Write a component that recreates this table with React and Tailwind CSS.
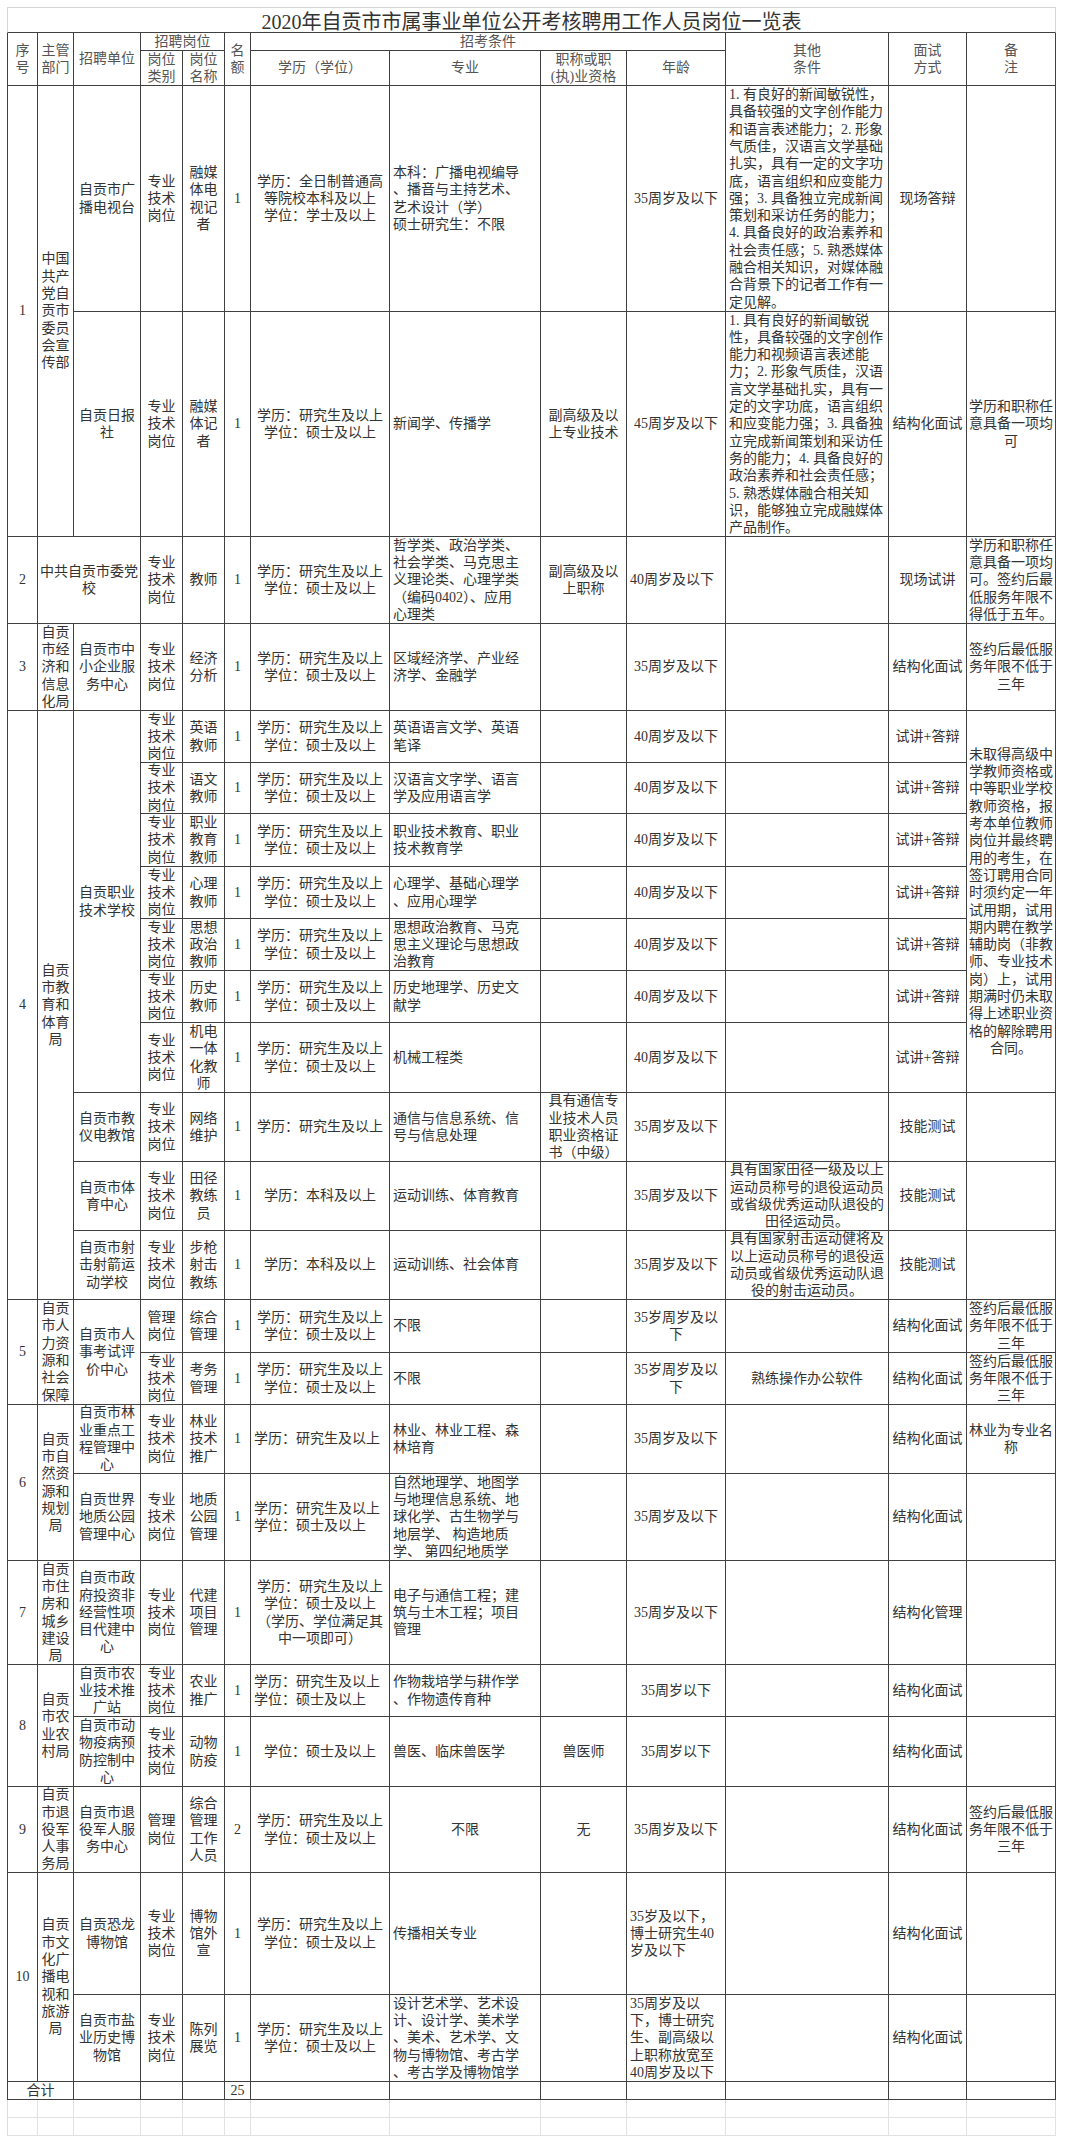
import clsx from "clsx";

// 2020年自贡市市属事业单位公开考核聘用工作人员岗位一览表 — spreadsheet style table

const EDU = "学历：研究生及以上\n学位：硕士及以上";
const ZY = "专业\n技术\n岗位";
const A40 = "40周岁及以下";
const A35 = "35周岁及以下";
const SJ = "试讲+答辩";
const JG = "结构化面试";
const QY = "签约后最低服\n务年限不低于\n三年";

const OTHER1 =
  "1. 有良好的新闻敏锐性，\n具备较强的文字创作能力\n和语言表述能力；2. 形象\n气质佳，汉语言文学基础\n扎实，具有一定的文字功\n底，语言组织和应变能力\n强；3. 具备独立完成新闻\n策划和采访任务的能力；\n4. 具备良好的政治素养和\n社会责任感；5. 熟悉媒体\n融合相关知识，对媒体融\n合背景下的记者工作有一\n定见解。";
const OTHER2 =
  "1. 具有良好的新闻敏锐\n性，具备较强的文字创作\n能力和视频语言表述能\n力；2. 形象气质佳，汉语\n言文学基础扎实，具有一\n定的文字功底，语言组织\n和应变能力强；3. 具备独\n立完成新闻策划和采访任\n务的能力；4. 具备良好的\n政治素养和社会责任感；\n5. 熟悉媒体融合相关知\n识，能够独立完成融媒体\n产品制作。";
const NOTE4 =
  "未取得高级中\n学教师资格或\n中等职业学校\n教师资格，报\n考本单位教师\n岗位并最终聘\n用的考生，在\n签订聘用合同\n时须约定一年\n试用期，试用\n期内聘在教学\n辅助岗（非教\n师、专业技术\n岗）上，试用\n期满时仍未取\n得上述职业资\n格的解除聘用\n合同。";

const L = (t, s = "") => ({ t, a: "l", s });
const S = (t, s) => ({ t, s });

const header = [
  S("序\n号", "row-span-2"),
  S("主管\n部门", "row-span-2"),
  S("招聘单位", "row-span-2"),
  S("招聘岗位", "col-span-2"),
  S("名\n额", "row-span-2"),
  S("招考条件", "col-span-4"),
  S("其他\n条件", "row-span-2"),
  S("面试\n方式", "row-span-2"),
  S("备\n注", "row-span-2"),
  "岗位\n类别",
  "岗位\n名称",
  "学历（学位）",
  "专业",
  "职称或职\n(执)业资格",
  "年龄",
];

const body = [
  // 1
  S("1", "row-span-2"), S("中国\n共产\n党自\n贡市\n委员\n会宣\n传部", "row-span-2"), "自贡市广\n播电视台", ZY, "融媒\n体电\n视记\n者", "1",
  "学历：全日制普通高\n等院校本科及以上\n学位：学士及以上", L("本科：广播电视编导\n、播音与主持艺术、\n艺术设计（学）\n硕士研究生：不限"), "", A35, L(OTHER1), "现场答辩", "",
  "自贡日报\n社", ZY, "融媒\n体记\n者", "1", EDU, L("新闻学、传播学"), "副高级及以\n上专业技术", "45周岁及以下", L(OTHER2), JG, "学历和职称任\n意具备一项均\n可",
  // 2
  "2", S("中共自贡市委党\n校", "col-span-2"), ZY, "教师", "1", EDU,
  L("哲学类、政治学类、\n社会学类、马克思主\n义理论类、心理学类\n（编码0402）、应用\n心理类"), "副高级及以\n上职称", L(A40), "", "现场试讲",
  "学历和职称任\n意具备一项均\n可。签约后最\n低服务年限不\n得低于五年。",
  // 3
  "3", "自贡\n市经\n济和\n信息\n化局", "自贡市中\n小企业服\n务中心", ZY, "经济\n分析", "1", EDU, L("区域经济学、产业经\n济学、金融学"), "", A35, "", JG, QY,
  // 4
  S("4", "row-span-10"), S("自贡\n市教\n育和\n体育\n局", "row-span-10"), S("自贡职业\n技术学校", "row-span-7"), ZY, "英语\n教师", "1", EDU,
  L("英语语言文学、英语\n笔译"), "", A40, "", SJ, S(NOTE4, "row-span-7"),
  ZY, "语文\n教师", "1", EDU, L("汉语言文字学、语言\n学及应用语言学"), "", A40, "", SJ,
  ZY, "职业\n教育\n教师", "1", EDU, L("职业技术教育、职业\n技术教育学"), "", A40, "", SJ,
  ZY, "心理\n教师", "1", EDU, L("心理学、基础心理学\n、应用心理学"), "", A40, "", SJ,
  ZY, "思想\n政治\n教师", "1", EDU, L("思想政治教育、马克\n思主义理论与思想政\n治教育"), "", A40, "", SJ,
  ZY, "历史\n教师", "1", EDU, L("历史地理学、历史文\n献学"), "", A40, "", SJ,
  ZY, "机电\n一体\n化教\n师", "1", EDU, L("机械工程类"), "", A40, "", SJ,
  "自贡市教\n仪电教馆", ZY, "网络\n维护", "1", "学历：研究生及以上", L("通信与信息系统、信\n号与信息处理"),
  "具有通信专\n业技术人员\n职业资格证\n书（中级）", A35, "", "技能测试", "",
  "自贡市体\n育中心", ZY, "田径\n教练\n员", "1", "学历：本科及以上", L("运动训练、体育教育"), "", A35,
  "具有国家田径一级及以上\n运动员称号的退役运动员\n或省级优秀运动队退役的\n田径运动员。", "技能测试", "",
  "自贡市射\n击射箭运\n动学校", ZY, "步枪\n射击\n教练", "1", "学历：本科及以上", L("运动训练、社会体育"), "", A35,
  "具有国家射击运动健将及\n以上运动员称号的退役运\n动员或省级优秀运动队退\n役的射击运动员。", "技能测试", "",
  // 5
  S("5", "row-span-2"), S("自贡\n市人\n力资\n源和\n社会\n保障", "row-span-2"), S("自贡市人\n事考试评\n价中心", "row-span-2"), "管理\n岗位", "综合\n管理", "1", EDU,
  L("不限"), "", "35岁周岁及以\n下", "", JG, QY,
  ZY, "考务\n管理", "1", EDU, L("不限"), "", "35岁周岁及以\n下", "熟练操作办公软件", JG, QY,
  // 6
  S("6", "row-span-2"), S("自贡\n市自\n然资\n源和\n规划\n局", "row-span-2"), "自贡市林\n业重点工\n程管理中\n心", ZY, "林业\n技术\n推广", "1",
  L("学历：研究生及以上"), L("林业、林业工程、森\n林培育"), "", A35, "", JG, "林业为专业名\n称",
  "自贡世界\n地质公园\n管理中心", ZY, "地质\n公园\n管理", "1", L(EDU),
  L("自然地理学、地图学\n与地理信息系统、地\n球化学、古生物学与\n地层学、 构造地质\n学、 第四纪地质学"), "", A35, "", JG, "",
  // 7
  "7", "自贡\n市住\n房和\n城乡\n建设\n局", "自贡市政\n府投资非\n经营性项\n目代建中\n心", ZY, "代建\n项目\n管理", "1",
  "学历：研究生及以上\n学位：硕士及以上\n（学历、学位满足其\n中一项即可）", L("电子与通信工程；建\n筑与土木工程；项目\n管理"), "", A35, "", "结构化管理", "",
  // 8
  S("8", "row-span-2"), S("自贡\n市农\n业农\n村局", "row-span-2"), "自贡市农\n业技术推\n广站", ZY, "农业\n推广", "1", L(EDU),
  L("作物栽培学与耕作学\n、作物遗传育种"), "", "35周岁以下", "", JG, "",
  "自贡市动\n物疫病预\n防控制中\n心", ZY, "动物\n防疫", "1", "学位：硕士及以上", L("兽医、临床兽医学"), "兽医师", "35周岁以下", "", JG, "",
  // 9
  "9", "自贡\n市退\n役军\n人事\n务局", "自贡市退\n役军人服\n务中心", "管理\n岗位", "综合\n管理\n工作\n人员", "2", EDU, "不限", "无", A35, "", JG, QY,
  // 10
  S("10", "row-span-2"), S("自贡\n市文\n化广\n播电\n视和\n旅游\n局", "row-span-2"), "自贡恐龙\n博物馆", ZY, "博物\n馆外\n宣", "1", EDU,
  L("传播相关专业"), "", L("35岁及以下，\n博士研究生40\n岁及以下"), "", JG, "",
  "自贡市盐\n业历史博\n物馆", ZY, "陈列\n展览", "1", EDU,
  L("设计艺术学、艺术设\n计、设计学、美术学\n、美术、艺术学、文\n物与博物馆、考古学\n、考古学及博物馆学"), "",
  L("35周岁及以\n下，博士研究\n生、副高级以\n上职称放宽至\n40周岁及以下"), "", JG, "",
  // total
  S("合计", "col-span-2"), "", "", "", "25", "", "", "", "", "", "", "",
];

function Cell({ cell, head }) {
  const c = typeof cell === "string" ? { t: cell } : cell;
  return (
    <div
      className={clsx(
        "flex items-center overflow-hidden border-r border-b border-[#404040]",
        c.s,
        c.a === "l" ? "justify-start pl-[3px] text-left" : "justify-center px-[2px] text-center",
        head ? "text-[#555]" : "text-[#333]"
      )}
    >
      <div className="whitespace-pre">{c.t}</div>
    </div>
  );
}

export default function App() {
  return (
    <div className="min-h-screen bg-white pt-[7px] pl-[7px] font-['Liberation_Serif','Noto_Sans_CJK_SC',serif] text-[14px] leading-[17.3px]">
      {/* title */}
      <div className="flex h-[26px] w-[1049px] items-center justify-center border-t border-l border-r border-b border-t-[#d6d6d6] border-l-[#d6d6d6] border-r-[#d6d6d6] border-b-[#404040] pt-[4px] text-[20px] leading-[20px] text-[#333]">
        2020年自贡市市属事业单位公开考核聘用工作人员岗位一览表
      </div>

      {/* table */}
      <div className="grid w-fit grid-cols-[30px_36px_67px_42px_42px_26px_139px_151px_86px_99px_163px_78px_89px] grid-rows-[18px_35px_226px_225px_87px_87px_52px_51px_53px_52px_52px_52px_70px_69px_69px_69px_53px_52px_69px_87px_104px_52px_70px_86px_122px_87px_18px] border-l border-[#404040]">
        {header.map((c, i) => (
          <Cell key={"h" + i} cell={c} head />
        ))}
        {body.map((c, i) => (
          <Cell key={"b" + i} cell={c} />
        ))}
      </div>

      {/* empty sheet rows */}
      <div className="grid w-fit grid-cols-[30px_36px_67px_42px_42px_26px_139px_151px_86px_99px_163px_78px_89px] grid-rows-[18px_18px] border-l border-[#dcdcdc]">
        {Array.from({ length: 26 }).map((_, i) => (
          <div key={i} className="border-r border-b border-[#e2e2e2]" />
        ))}
      </div>
    </div>
  );
}
